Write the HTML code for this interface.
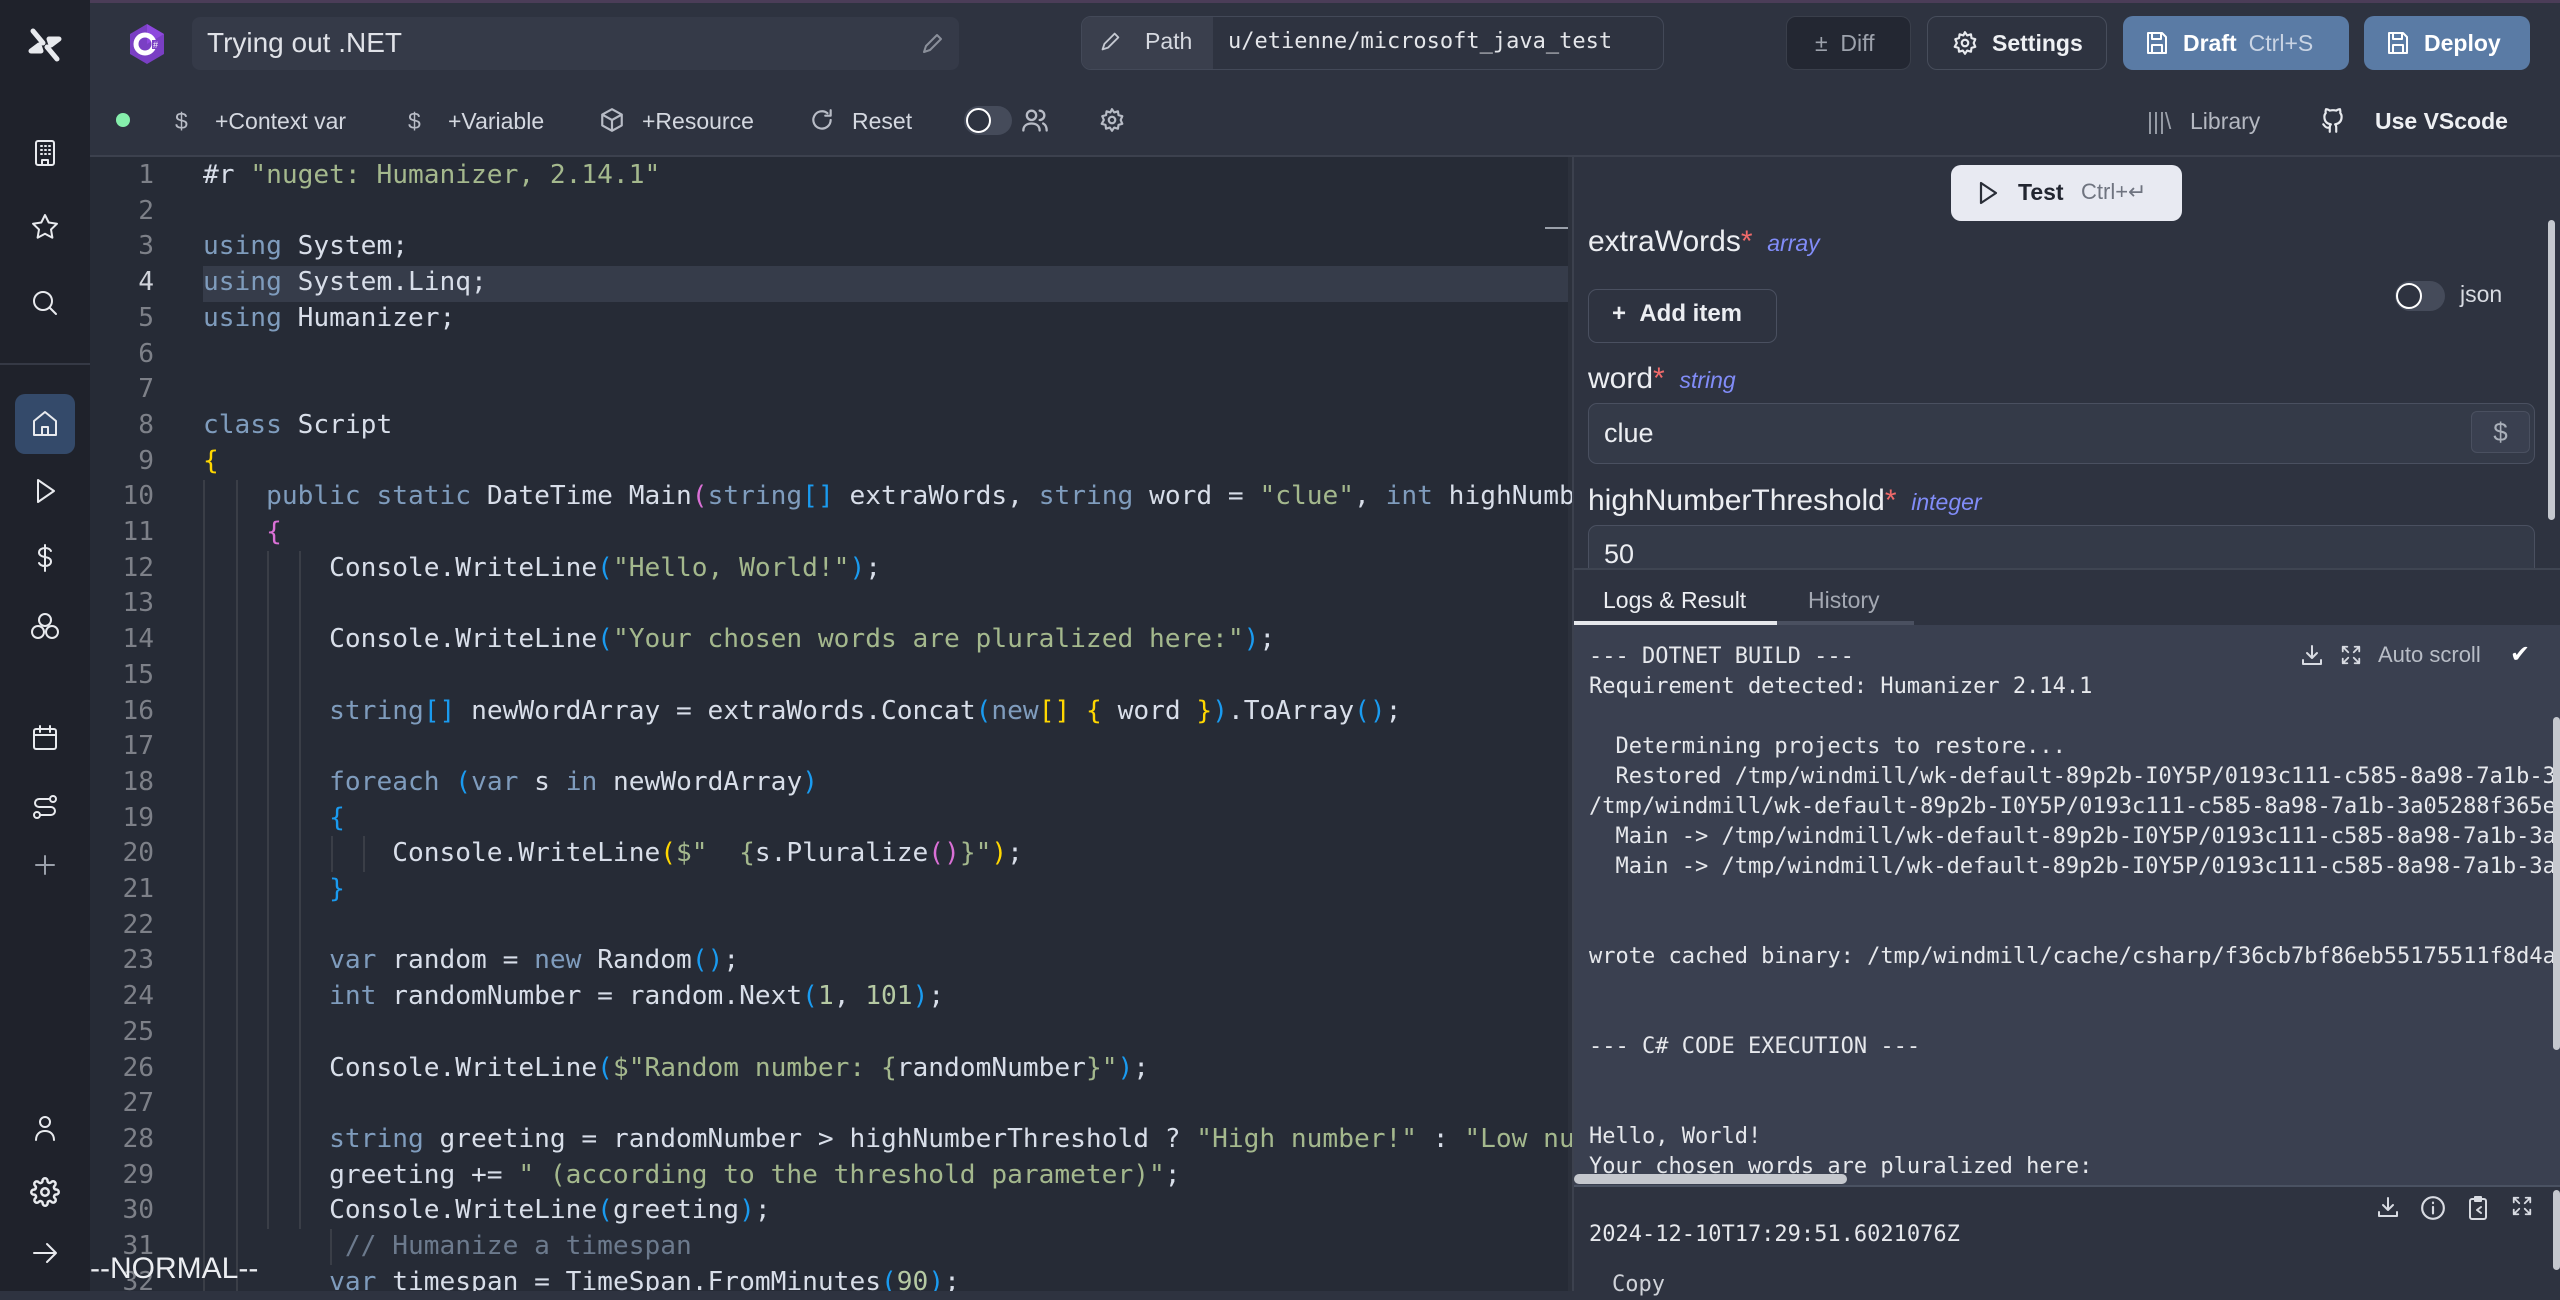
<!DOCTYPE html>
<html><head><meta charset="utf-8"><style>
*{box-sizing:border-box;margin:0;padding:0}
body{width:2560px;height:1291px;overflow:hidden;background:#2e3340;font-family:"Liberation Sans",sans-serif;color:#e5e7eb;position:relative}
.a{position:absolute}
.mono{font-family:"DejaVu Sans Mono","Liberation Mono",monospace}
#side{left:0;top:0;width:90px;height:1291px;background:#1f222b}
svg.i{position:absolute;fill:none;stroke:#e8eaee;stroke-width:2;stroke-linecap:round;stroke-linejoin:round}
#editor{left:90px;top:157px;width:1482px;height:1134px;background:#262b36;overflow:hidden}
.ln{position:absolute;left:0;width:64px;text-align:right;color:#7d8088;font-size:26.2px;line-height:35.7px;font-family:"DejaVu Sans Mono",monospace}
.cl{position:absolute;left:113px;white-space:pre;font-size:26.2px;line-height:35.7px;color:#d8dee9;font-family:"DejaVu Sans Mono",monospace}
.k{color:#7f9cbd}.s{color:#a4b88d}.b{color:#1a9bf0}.y{color:#ffd700}.p{color:#da70d6}.c{color:#6c7a8d}.n{color:#b5c9a3}
.g{position:absolute;width:2px;background:#3a3e47}
.btn{position:absolute;border-radius:10px;display:flex;align-items:center;font-size:23px;font-weight:bold}
.tb{position:absolute;font-size:23px;color:#d4d8e0;top:108px}
.log{position:absolute;left:1589px;font-size:22px;color:#e6e8ec;white-space:pre;font-family:"DejaVu Sans Mono",monospace;line-height:30px}
</style></head><body>
<div class="a" style="left:0;top:0;width:2560px;height:3px;background:#4b3d58"></div>
<div id="side" class="a">
 <div class="a" style="left:0;top:363px;width:90px;height:2px;background:#353945"></div>
 <div class="a" style="left:15px;top:394px;width:60px;height:60px;border-radius:10px;background:#344a6a"></div>
</div>
<svg class="i" style="left:25px;top:25px" width="40" height="40" viewBox="0 0 40 40"><path d="M8 6l10 12M22 22l10 12M14 20l-8 6h10zM26 20l8-6H24z" stroke-width="5" stroke="#e8eaee"/></svg>
<svg class="i" style="left:30px;top:138px" width="30" height="30" viewBox="0 0 30 30"><rect x="6" y="3" width="18" height="24" rx="2"/><path d="M11 8h1M15 8h1M19 8h1M11 12h1M15 12h1M19 12h1M11 16h1M15 16h1M19 16h1M12 27v-5h6v5"/></svg>
<svg class="i" style="left:30px;top:212px" width="30" height="30" viewBox="0 0 30 30"><path d="M15 3l3.7 7.5 8.3 1.2-6 5.8 1.4 8.2L15 21.8 7.6 25.7 9 17.5 3 11.7l8.3-1.2z"/></svg>
<svg class="i" style="left:30px;top:288px" width="30" height="30" viewBox="0 0 30 30"><circle cx="13" cy="13" r="9"/><path d="M20 20l6 6"/></svg>
<svg class="i" style="left:30px;top:409px" width="30" height="30" viewBox="0 0 30 30"><path d="M4 12L15 3l11 9v14H4zM12 26v-8h6v8"/></svg>
<svg class="i" style="left:30px;top:476px" width="30" height="30" viewBox="0 0 30 30"><path d="M8 4l16 11-16 11z"/></svg>
<svg class="i" style="left:30px;top:543px" width="30" height="30" viewBox="0 0 30 30"><path d="M15 2v26M21 8c-1-2-3-3-6-3s-6 1.5-6 4.5 3 4 6 4.5 6 1.5 6 4.5-3 4.5-6 4.5-5-1-6-3"/></svg>
<svg class="i" style="left:29px;top:611px" width="32" height="32" viewBox="0 0 32 32"><circle cx="16" cy="9" r="6"/><circle cx="9" cy="21" r="6"/><circle cx="23" cy="21" r="6"/></svg>
<svg class="i" style="left:30px;top:723px" width="30" height="30" viewBox="0 0 30 30"><rect x="4" y="6" width="22" height="20" rx="2"/><path d="M4 12h22M10 3v6M20 3v6"/></svg>
<svg class="i" style="left:30px;top:792px" width="30" height="30" viewBox="0 0 30 30"><circle cx="23" cy="7" r="3"/><circle cx="7" cy="23" r="3"/><path d="M20 7H9a4 4 0 000 8h12a4 4 0 010 8H10"/></svg>
<svg class="i" style="left:32px;top:852px" width="26" height="26" viewBox="0 0 26 26"><path d="M13 4v18M4 13h18" stroke="#9aa0aa"/></svg>
<svg class="i" style="left:30px;top:1113px" width="30" height="30" viewBox="0 0 30 30"><circle cx="15" cy="9" r="5"/><path d="M6 27c0-6 4-9 9-9s9 3 9 9"/></svg>
<svg class="i" style="left:30px;top:1177px" width="30" height="30" viewBox="0 0 24 24"><circle cx="12" cy="12" r="3"/><path d="M19.4 15a1.7 1.7 0 00.3 1.8l.1.1a2 2 0 11-2.8 2.8l-.1-.1a1.7 1.7 0 00-1.8-.3 1.7 1.7 0 00-1 1.5V21a2 2 0 11-4 0v-.1a1.7 1.7 0 00-1.100-1.5 1.7 1.7 0 00-1.8.3l-.1.1a2 2 0 11-2.8-2.8l.1-.1a1.7 1.7 0 00.3-1.8 1.7 1.7 0 00-1.5-1H3a2 2 0 110-4h.1a1.7 1.7 0 001.5-1.1 1.7 1.7 0 00-.3-1.8l-.1-.1a2 2 0 112.8-2.8l.1.1a1.7 1.7 0 001.8.3H9a1.7 1.7 0 001-1.5V3a2 2 0 114 0v.1a1.7 1.7 0 001 1.5 1.7 1.7 0 001.8-.3l.1-.1a2 2 0 112.8 2.8l-.1.1a1.7 1.7 0 00-.3 1.8V9a1.7 1.7 0 001.5 1H21a2 2 0 110 4h-.1a1.7 1.7 0 00-1.5 1z"/></svg>
<svg class="i" style="left:30px;top:1238px" width="30" height="30" viewBox="0 0 30 30"><path d="M4 15h22M17 6l9 9-9 9"/></svg>

<svg class="a" style="left:128px;top:23px" width="38" height="42" viewBox="0 0 38 42"><path d="M19 1l17 10v20L19 41 2 31V11z" fill="#7a3fc4"/><path d="M19 1l17 10L19 21z" fill="#9b4ff0" opacity=".6"/><circle cx="17" cy="21" r="9" fill="none" stroke="#fff" stroke-width="5"/><path d="M24 17h9v9h-9z" fill="#7a3fc4"/><text x="25" y="25" font-size="9" fill="#fff" font-family="Liberation Sans">#</text></svg>
<div class="a" style="left:192px;top:17px;width:767px;height:53px;border-radius:8px;background:#353a48"></div>
<div class="a" style="left:207px;top:24px;font-size:28px;color:#e0e2e8;line-height:38px">Trying out .NET</div>
<svg class="i" style="left:918px;top:30px;stroke:#8a8f9a" width="28" height="28" viewBox="0 0 28 28"><path d="M6 22l2-6L19 5l4 4-11 11z"/></svg>
<div class="a" style="left:1081px;top:16px;width:583px;height:54px;border:1px solid #434958;border-radius:10px;background:#2e3340;overflow:hidden"><div style="width:131px;height:100%;background:#3a3f4d"></div></div>
<svg class="i" style="left:1097px;top:29px;stroke:#c5c9d2" width="26" height="26" viewBox="0 0 28 28"><path d="M6 22l2-6L19 5l4 4-11 11z"/></svg>
<div class="a" style="left:1145px;top:28px;font-size:23px;color:#d6d9e0">Path</div>
<div class="a mono" style="left:1228px;top:29px;font-size:22px;color:#e4e6ea">u/etienne/microsoft_java_test</div>
<div class="btn" style="left:1786px;top:16px;width:125px;height:54px;background:#232732;border:1px solid #3a3f4b;color:#9da2ac;font-weight:normal;padding-left:28px">±&nbsp;&nbsp;Diff</div>
<div class="btn" style="left:1927px;top:16px;width:180px;height:54px;border:1px solid #474d5b;color:#eef0f3;padding-left:24px"><svg class="i" style="position:static;margin-right:14px" width="26" height="26" viewBox="0 0 24 24"><circle cx="12" cy="12" r="3"/><path d="M12 2l2 3 3.5-1 .5 3.5 3.5 1-1.5 3.5 1.5 3.5-3.5 1-.5 3.5-3.5-1-2 3-2-3-3.5 1-.5-3.5-3.5-1L4.5 12 3 8.5l3.5-1L7 4l3.5 1z"/></svg>Settings</div>
<div class="btn" style="left:2123px;top:16px;width:226px;height:54px;background:#5a7ba5;color:#fff;padding-left:22px"><svg class="i" style="position:static;margin-right:14px;stroke:#fff" width="24" height="26" viewBox="0 0 24 26"><path d="M3 3h14l4 4v16H3zM7 3v6h9V3M7 23v-8h10v8"/></svg>Draft<span style="font-weight:normal;color:#c9d4e4;margin-left:12px">Ctrl+S</span></div>
<div class="btn" style="left:2364px;top:16px;width:166px;height:54px;background:#5a7ba5;color:#fff;padding-left:22px"><svg class="i" style="position:static;margin-right:14px;stroke:#fff" width="24" height="26" viewBox="0 0 24 26"><path d="M3 3h14l4 4v16H3zM7 3v6h9V3M7 23v-8h10v8"/></svg>Deploy</div>
<div class="a" style="left:116px;top:113px;width:14px;height:14px;border-radius:50%;background:#86efac"></div>
<div class="tb" style="left:175px;color:#b8bcc6">$</div><div class="tb" style="left:215px">+Context var</div>
<div class="tb" style="left:408px;color:#b8bcc6">$</div><div class="tb" style="left:448px">+Variable</div>
<svg class="i" style="left:599px;top:107px;stroke:#b8bcc6" width="26" height="26" viewBox="0 0 24 24"><path d="M12 2l9 5v10l-9 5-9-5V7zM3 7l9 5 9-5M12 12v10"/></svg><div class="tb" style="left:642px">+Resource</div>
<svg class="i" style="left:809px;top:107px;stroke:#b8bcc6" width="26" height="26" viewBox="0 0 24 24"><path d="M20 12a8 8 0 11-3-6.3M20 3v5h-5"/></svg><div class="tb" style="left:852px">Reset</div>
<div class="a" style="left:964px;top:106px;width:48px;height:29px;border-radius:15px;background:#454b5a"></div><div class="a" style="left:966px;top:108px;width:25px;height:25px;border-radius:50%;border:2px solid #fff;background:#2e3340"></div>
<svg class="i" style="left:1021px;top:106px;stroke:#b8bcc6" width="28" height="28" viewBox="0 0 24 24"><circle cx="9" cy="8" r="4"/><path d="M2 21c0-4 3-6 7-6s7 2 7 6M16 4a4 4 0 010 8M19 15c2 1 3 3 3 6"/></svg>
<svg class="i" style="left:1099px;top:107px;stroke:#b8bcc6" width="26" height="26" viewBox="0 0 24 24"><circle cx="12" cy="12" r="3"/><path d="M12 2l2 3 3.5-1 .5 3.5 3.5 1-1.5 3.5 1.5 3.5-3.5 1-.5 3.5-3.5-1-2 3-2-3-3.5 1-.5-3.5-3.5-1L4.5 12 3 8.5l3.5-1L7 4l3.5 1z"/></svg>
<div class="tb" style="left:2147px;color:#9ca1ab">|||\</div><div class="tb" style="left:2190px;color:#b4b8c1">Library</div>
<svg class="i" style="left:2320px;top:106px" width="26" height="28" viewBox="0 0 24 26"><path d="M9 24v-4c-4 1-5-2-6-3M15 24v-4c0-1.5-.5-2.5-1-3 3-.5 6-2 6-7a5 5 0 00-1.3-3.5c.2-1 .2-2.2-.2-3.5 0 0-1.2-.3-3.5 1.3a12 12 0 00-6 0C6.7 2.7 5.5 3 5.5 3 5 4.3 5 5.5 5.3 6.5A5 5 0 004 10c0 5 3 6.5 6 7-.5.5-1 1.5-1 3"/></svg><div class="tb" style="left:2375px;font-weight:bold;color:#eef0f3">Use VScode</div>
<div class="a" style="left:90px;top:155px;width:2470px;height:2px;background:#3c414e"></div>

<div id="editor" class="a">
 <div class="a" style="left:113px;top:109px;width:1369px;height:36px;background:#363c4a"></div>
 <div class="g" style="left:113px;top:323px;height:813px"></div>
 <div class="g" style="left:146px;top:323px;height:813px"></div>
 <div class="g" style="left:177px;top:394px;height:678px"></div>
 <div class="g" style="left:209px;top:394px;height:678px"></div>
 <div class="g" style="left:241px;top:679px;height:36px"></div>
 <div class="g" style="left:273px;top:679px;height:36px"></div>
 <div class="g" style="left:240px;top:1072px;height:36px"></div>
 <div class="a" style="left:1455px;top:70px;width:24px;height:2px;background:#9aa0aa"></div>
 <div class="a" style="left:1478px;top:0;width:4px;height:1134px;background:#2c313c"></div>
 <div id="code" class="a" style="left:0;top:1px;width:1482px;height:1140px"></div>
 <div class="a" style="left:0;top:1092px;font-size:30px;color:#eceef2;line-height:40px">--NORMAL--</div>
</div>

<div class="a" style="left:1572px;top:157px;width:2px;height:1134px;background:#3c414e"></div>
<div class="a" style="left:1951px;top:165px;width:231px;height:56px;border-radius:10px;background:#e8eaf2"></div>
<svg class="a" style="left:1978px;top:180px" width="22" height="26" viewBox="0 0 22 26"><path d="M3 3l15 10L3 23z" fill="none" stroke="#2a2e38" stroke-width="2.2" stroke-linejoin="round"/></svg>
<div class="a" style="left:2018px;top:179px;font-size:23px;font-weight:bold;color:#222631">Test</div>
<div class="a" style="left:2081px;top:179px;font-size:22px;color:#6f7480">Ctrl+↵</div>
<div class="a" style="left:1588px;top:225px;font-size:30px;color:#eceef2">extraWords<span style="color:#f06a6a">*</span> <i style="font-size:23px;color:#818cf8">&nbsp;array</i></div>
<div class="a" style="left:1588px;top:289px;width:189px;height:54px;border:1px solid #4a5060;border-radius:9px"></div>
<div class="a" style="left:1612px;top:300px;font-size:24px;color:#eceef2;font-weight:bold">+&nbsp;&nbsp;Add item</div>
<div class="a" style="left:2395px;top:281px;width:50px;height:30px;border-radius:15px;background:#454b5a"></div><div class="a" style="left:2396px;top:283px;width:26px;height:26px;border-radius:50%;border:2px solid #fff;background:#2e3340"></div>
<div class="a" style="left:2460px;top:281px;font-size:23px;color:#d8dbe2">json</div>
<div class="a" style="left:1588px;top:362px;font-size:30px;color:#eceef2">word<span style="color:#f06a6a">*</span> <i style="font-size:23px;color:#818cf8">&nbsp;string</i></div>
<div class="a" style="left:1588px;top:403px;width:947px;height:61px;border:1px solid #4a5060;border-radius:9px;background:#343a48"></div>
<div class="a" style="left:1604px;top:418px;font-size:27px;color:#eceef2">clue</div>
<div class="a" style="left:2471px;top:411px;width:59px;height:42px;border:1px solid #4a5060;border-radius:6px;background:#3a4050;color:#aab0ba;font-size:26px;text-align:center;line-height:40px">$</div>
<div class="a" style="left:1588px;top:484px;font-size:30px;color:#eceef2">highNumberThreshold<span style="color:#f06a6a">*</span> <i style="font-size:23px;color:#818cf8">&nbsp;integer</i></div>
<div class="a" style="left:1588px;top:525px;width:947px;height:60px;border:1px solid #4a5060;border-radius:9px;background:#343a48"></div>
<div class="a" style="left:1604px;top:539px;font-size:27px;color:#eceef2">50</div>
<div class="a" style="left:2548px;top:220px;width:7px;height:300px;border-radius:4px;background:#c5c8ce"></div>
<div class="a" style="left:1574px;top:568px;width:986px;height:58px;background:#2e3340;border-top:2px solid #3f4552"></div>
<div class="a" style="left:1603px;top:587px;font-size:23px;color:#eceef2">Logs &amp; Result</div>
<div class="a" style="left:1808px;top:587px;font-size:23px;color:#a3a8b2">History</div>
<div class="a" style="left:1574px;top:621px;width:203px;height:4px;background:#e6e8ec"></div>
<div class="a" style="left:1777px;top:621px;width:137px;height:4px;background:#4a5060"></div>
<div class="a" style="left:1574px;top:625px;width:986px;height:560px;background:#3a4050"></div>
<div class="a" style="left:1574px;top:625px;width:980px;height:560px;overflow:hidden">
<div class="log" style="left:15px;top:17px">--- DOTNET BUILD ---
Requirement detected: Humanizer 2.14.1

  Determining projects to restore...
  Restored /tmp/windmill/wk-default-89p2b-I0Y5P/0193c111-c585-8a98-7a1b-3a05288f365e/Main.csproj
/tmp/windmill/wk-default-89p2b-I0Y5P/0193c111-c585-8a98-7a1b-3a05288f365e/Main.csproj
  Main -> /tmp/windmill/wk-default-89p2b-I0Y5P/0193c111-c585-8a98-7a1b-3a05288f365e/bin
  Main -> /tmp/windmill/wk-default-89p2b-I0Y5P/0193c111-c585-8a98-7a1b-3a05288f365e/out


wrote cached binary: /tmp/windmill/cache/csharp/f36cb7bf86eb55175511f8d4a


--- C# CODE EXECUTION ---


Hello, World!
Your chosen words are pluralized here:</div>
</div>
<svg class="i" style="left:2300px;top:643px;stroke:#d8dbe2" width="24" height="24" viewBox="0 0 24 24"><path d="M12 3v12M7 10l5 5 5-5M3 17v4h18v-4"/></svg>
<svg class="i" style="left:2340px;top:644px;stroke:#d8dbe2" width="22" height="22" viewBox="0 0 24 24"><path d="M3 8V3h5M16 3h5v5M21 16v5h-5M8 21H3v-5M3 3l6 6M21 3l-6 6M21 21l-6-6M3 21l6-6"/></svg>
<div class="a" style="left:2378px;top:642px;font-size:22px;color:#b8bdc6">Auto scroll</div>
<div class="a" style="left:2510px;top:640px;font-size:24px;color:#fff">✔</div>
<div class="a" style="left:2553px;top:717px;width:7px;height:333px;border-radius:4px;background:#c5c8ce"></div>
<div class="a" style="left:1574px;top:1174px;width:273px;height:10px;border-radius:5px;background:#c5c8ce"></div>
<div class="a" style="left:1574px;top:1185px;width:986px;height:106px;background:#2e3340;border-top:2px solid #4a5262"></div>
<svg class="i" style="left:2376px;top:1195px;stroke:#d8dbe2" width="24" height="24" viewBox="0 0 24 24"><path d="M12 3v12M7 10l5 5 5-5M3 17v4h18v-4"/></svg>
<svg class="i" style="left:2420px;top:1195px;stroke:#d8dbe2" width="26" height="26" viewBox="0 0 24 24"><circle cx="12" cy="12" r="10"/><path d="M12 11v6M12 7v.5"/></svg>
<svg class="i" style="left:2466px;top:1195px;stroke:#d8dbe2" width="24" height="26" viewBox="0 0 24 26"><rect x="4" y="4" width="16" height="20" rx="2"/><path d="M9 2h6v4H9zM15 12l-4 3 4 3"/></svg>
<svg class="i" style="left:2511px;top:1195px;stroke:#d8dbe2" width="22" height="22" viewBox="0 0 24 24"><path d="M3 8V3h5M16 3h5v5M21 16v5h-5M8 21H3v-5M3 3l6 6M21 3l-6 6M21 21l-6-6M3 21l6-6"/></svg>
<div class="log" style="top:1220px">2024-12-10T17:29:51.6021076Z</div>
<div class="log" style="top:1270px;left:1612px;color:#cfd2d8">Copy</div>
<div class="a" style="left:2553px;top:1190px;width:7px;height:80px;border-radius:4px;background:#c5c8ce"></div>

<script>
const L={
1:'#r <span class="s">"nuget: Humanizer, 2.14.1"</span>',
3:'<span class="k">using</span> System;',
4:'<span class="k">using</span> System.Linq;',
5:'<span class="k">using</span> Humanizer;',
8:'<span class="k">class</span> Script',
9:'<span class="y">{</span>',
10:'    <span class="k">public static</span> DateTime Main<span class="p">(</span><span class="k">string</span><span class="b">[]</span> extraWords, <span class="k">string</span> word = <span class="s">"clue"</span>, <span class="k">int</span> highNumberThreshold = <span class="n">50</span><span class="p">)</span>',
11:'    <span class="p">{</span>',
12:'        Console.WriteLine<span class="b">(</span><span class="s">"Hello, World!"</span><span class="b">)</span>;',
14:'        Console.WriteLine<span class="b">(</span><span class="s">"Your chosen words are pluralized here:"</span><span class="b">)</span>;',
16:'        <span class="k">string</span><span class="b">[]</span> newWordArray = extraWords.Concat<span class="b">(</span><span class="k">new</span><span class="y">[]</span> <span class="y">{</span> word <span class="y">}</span><span class="b">)</span>.ToArray<span class="b">()</span>;',
18:'        <span class="k">foreach</span> <span class="b">(</span><span class="k">var</span> s <span class="k">in</span> newWordArray<span class="b">)</span>',
19:'        <span class="b">{</span>',
20:'            Console.WriteLine<span class="y">(</span><span class="s">$"  {</span>s.Pluralize<span class="p">()</span><span class="s">}"</span><span class="y">)</span>;',
21:'        <span class="b">}</span>',
23:'        <span class="k">var</span> random = <span class="k">new</span> Random<span class="b">()</span>;',
24:'        <span class="k">int</span> randomNumber = random.Next<span class="b">(</span><span class="n">1</span>, <span class="n">101</span><span class="b">)</span>;',
26:'        Console.WriteLine<span class="b">(</span><span class="s">$"Random number: {</span>randomNumber<span class="s">}"</span><span class="b">)</span>;',
28:'        <span class="k">string</span> greeting = randomNumber &gt; highNumberThreshold ? <span class="s">"High number!"</span> : <span class="s">"Low number!"</span>;',
29:'        greeting += <span class="s">" (according to the threshold parameter)"</span>;',
30:'        Console.WriteLine<span class="b">(</span>greeting<span class="b">)</span>;',
31:'         <span class="c">// Humanize a timespan</span>',
32:'        <span class="k">var</span> timespan = TimeSpan.FromMinutes<span class="b">(</span><span class="n">90</span><span class="b">)</span>;'};
let h='';
for(let i=1;i<=32;i++){const t=(i-1)*35.7;
h+=`<div class="ln" style="top:${t}px;${i==4?'color:#d0d3da':''}">${i}</div>`;
if(L[i])h+=`<div class="cl" style="top:${t}px">${L[i]}</div>`;}
document.getElementById('code').innerHTML=h;
</script>
</body></html>
